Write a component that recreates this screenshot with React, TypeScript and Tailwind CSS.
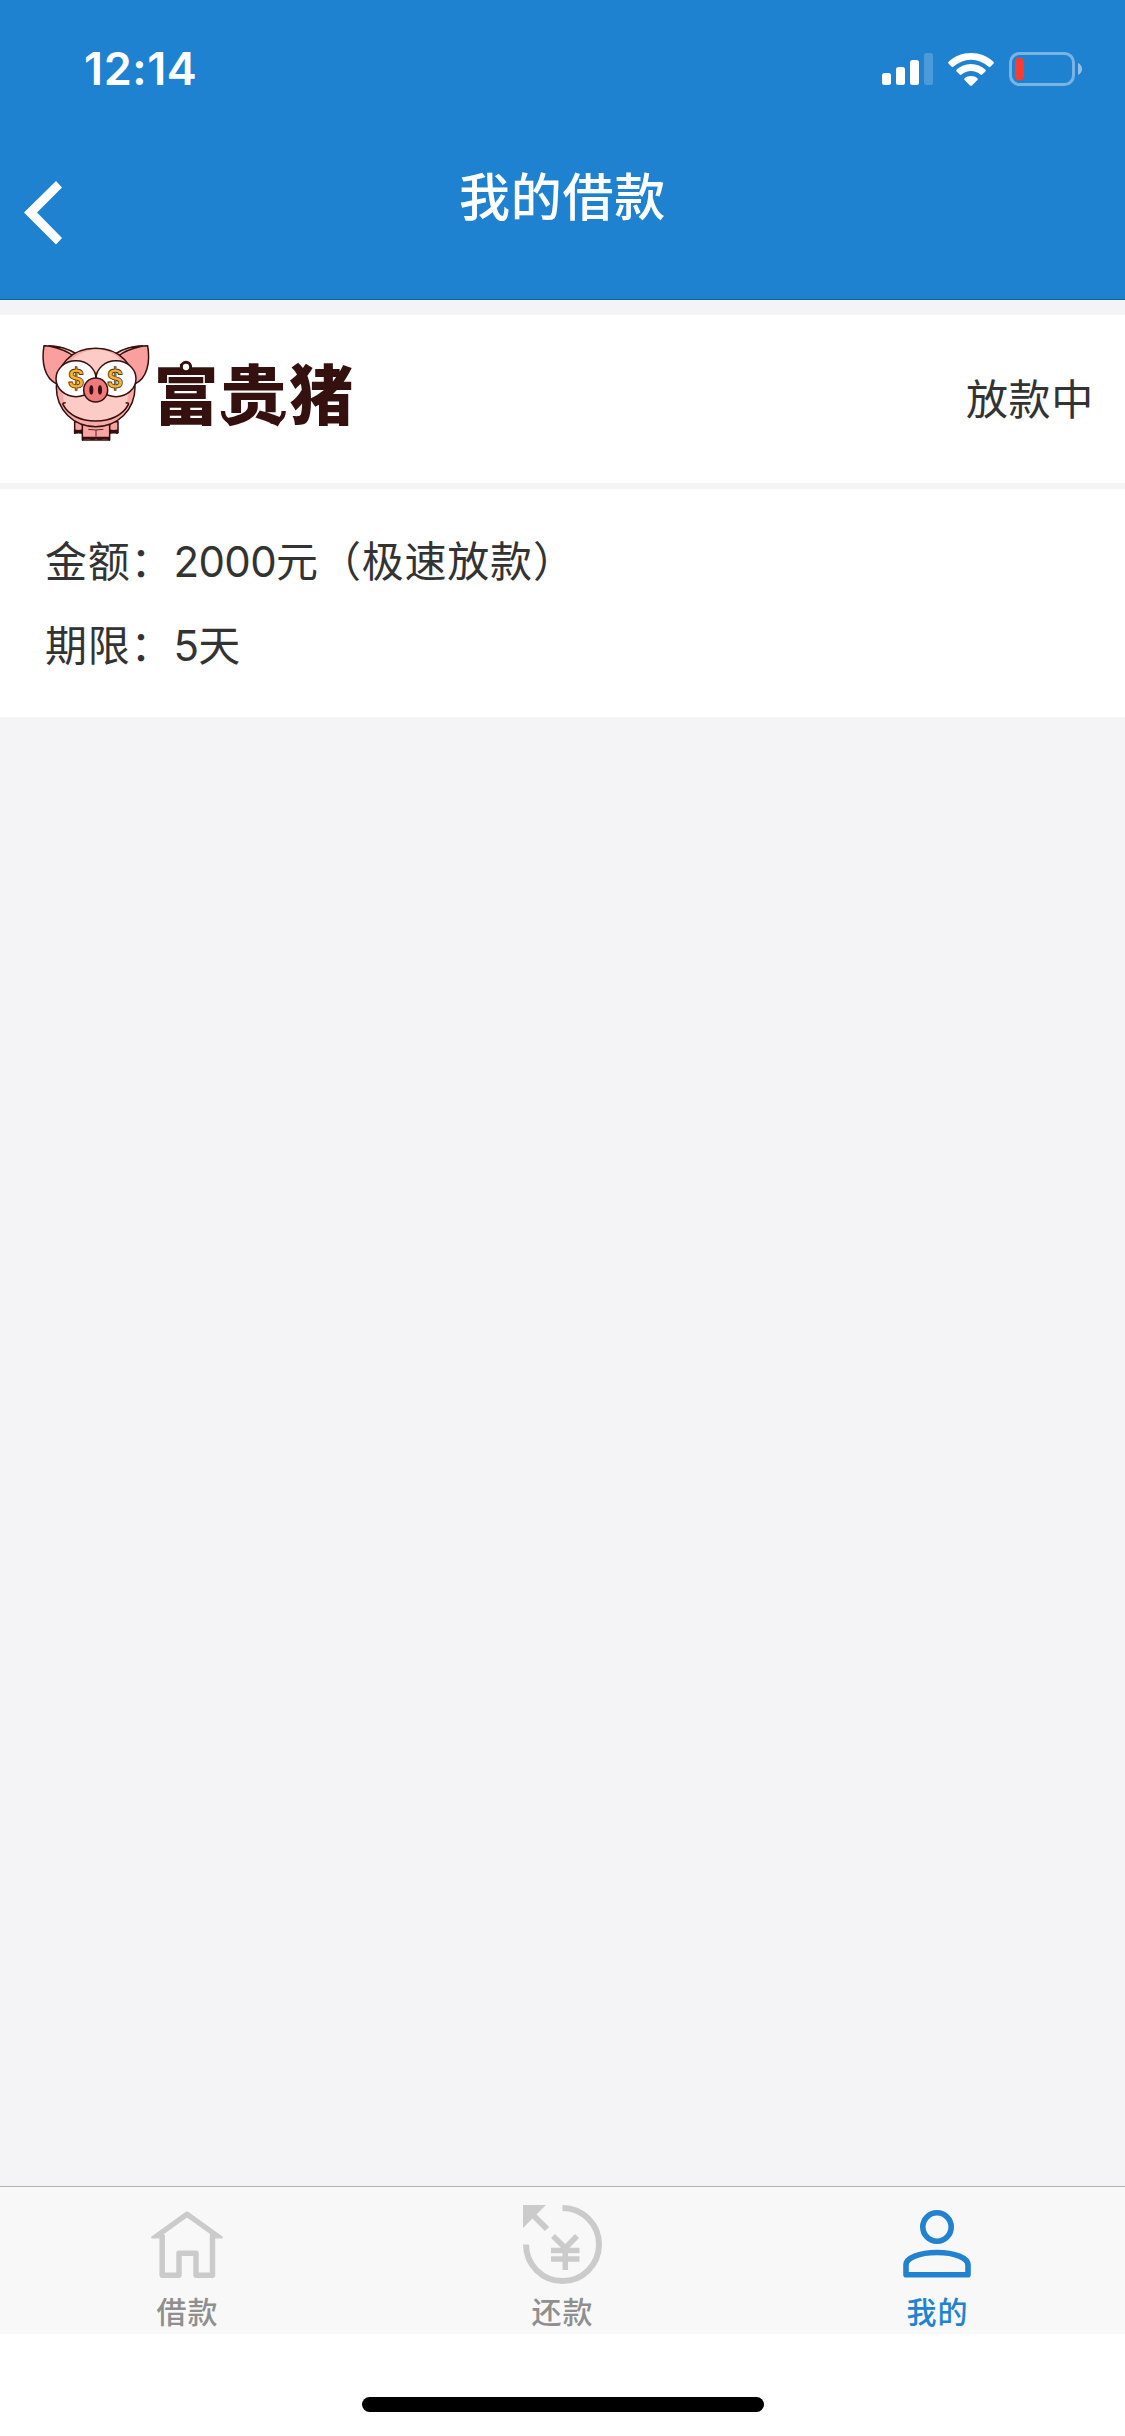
import React from "react";

const OUTLINE = "#34100f";

const SignalIcon = () => (
  <svg width="51" height="32" viewBox="0 0 51 32" fill="#fff">
    <rect x="0" y="20" width="9" height="12" rx="2.5" />
    <rect x="14" y="14" width="9" height="18" rx="2.5" />
    <rect x="28" y="7" width="9" height="25" rx="2.5" />
    <rect x="42" y="0" width="9" height="32" rx="2.5" opacity="0.2" />
  </svg>
);

const WifiIcon = () => (
  <svg width="46" height="33" viewBox="0 0 46 33" fill="#fff">
    <path d="M23 0C31.700 0 39.500 3.300 45.400 8.800Q46.300 9.700 45.500 10.600L42.400 13.800Q41.600 14.600 40.700 13.800A26 26 0 0 0 5.300 13.800Q4.400 14.600 3.600 13.800L.5 10.600Q-.3 9.700.6 8.800C6.500 3.300 14.300 0 23 0Z" />
    <path d="M23 11C28.600 11 33.500 13.100 37.300 16.600Q38.200 17.500 37.400 18.400L34.200 21.600Q33.400 22.400 32.500 21.600A14.500 14.500 0 0 0 13.500 21.600Q12.600 22.400 11.800 21.600L8.600 18.400Q7.800 17.500 8.700 16.600C12.500 13.100 17.400 11 23 11Z" />
    <path d="M23 23C25.600 23 27.700 23.900 29.400 25.300Q30.200 26.100 29.400 26.900L24 32.400Q23 33.300 22 32.400L16.600 26.900Q15.800 26.100 16.600 25.300C18.300 23.900 20.400 23 23 23Z" />
  </svg>
);

const BatteryIcon = () => (
  <svg width="73" height="34" viewBox="0 0 73 34">
    <rect x="1.500" y="1.500" width="63" height="31" rx="9" fill="none" stroke="#fff" strokeWidth="3" opacity="0.4" />
    <path d="M69 11C71.500 12.300 73 14.300 73 17S71.500 21.700 69 23Z" fill="#fff" opacity="0.5" />
    <rect x="6" y="6" width="9" height="22" rx="3.500" fill="#ff3b30" />
  </svg>
);

const BackIcon = () => (
  <svg width="38" height="64" viewBox="0 0 38 64" fill="#fff">
    <path d="M32 0L38 6.500L13 31.500L38 57L32 63.500L0 31.500Z" />
  </svg>
);

const HomeIcon = () => (
  <svg width="73" height="67" viewBox="0 0 73 67" fill="none" stroke="#cbcbcb" strokeWidth="5.500" strokeLinejoin="round">
    <path
      d="M36 .5L37.500 1L71.500 25.500Q72.500 27 71 27.500H59L36 7L13 27.500H1Q-.5 27 .5 25.500L34.500 1Z"
      fill="#cbcbcb"
      stroke="none"
    />
    <path d="M36 6.500L13 23V27.500H59V23Z" fill="#f8f8f8" stroke="none" />
    <path d="M11.200 24V64.300H28V42.300H45V64.300H61.500V24" />
  </svg>
);

const RepayIcon = () => (
  <svg width="79" height="79" viewBox="0 0 79 79" fill="none" stroke="#cbcbcb" strokeWidth="6">
    <path d="M39.500 3A36.500 36.500 0 1 1 3 39.500" />
    <path d="M9 9L24 24" />
    <path d="M0 0H23L0 23Z" fill="#cbcbcb" stroke="none" />
    <path d="M30 31L42.300 43L54 31M42.300 41V65M28 45.500H56.500M28 54H56.500" strokeWidth="5.500" />
  </svg>
);

const UserIcon = () => (
  <svg width="68" height="68" viewBox="0 0 68 68" fill="none" stroke="#2182d0" strokeWidth="5.600">
    <circle cx="34" cy="17" r="14.200" />
    <path d="M3 64.800V55C3 48 16 42.500 34 42.500S65 48 65 55V64.800Z" strokeLinejoin="round" />
  </svg>
);

const BrandLogo = () => (
  <svg width="340" height="168" viewBox="0 15 1020 504">
    <g stroke={OUTLINE} strokeWidth="4.500" strokeLinejoin="round">
      {/* legs */}
      <path d="M134 335H160V368H134Z" fill="#f9a3a1" />
      <path d="M238 335H264V368H238Z" fill="#f9a3a1" />
      <path d="M134 361Q146 364 156 361V370Q146 364 134 370ZM240 361Q252 364 262 361V370Q252 364 240 370Z" fill={OUTLINE} />
      <path d="M157 335V390H239V335Z" fill="#f9a5a3" />
      {/* ears */}
      <path d="M42 107C34 155 42 205 82 223C88 185 108 152 136 132C112 116 78 107 42 107Z" fill="#f9a09f" />
      <path d="M353 107C361 155 353 205 313 223C307 185 287 152 259 132C283 116 317 107 353 107Z" fill="#f9a09f" />
      <path d="M57 108C88 108 115 116 140 132L130 138C108 120 80 113 57 108Z" fill="#fbcac6" />
      <path d="M338 108C307 108 280 116 255 132L265 138C287 120 315 113 338 108Z" fill="#fbcac6" />
      {/* head */}
      <path d="M197 115C272 115 315 167 315 232C315 300 263 350 197 350S79 300 79 232C79 167 122 115 197 115Z" fill="#f8aaa7" />
      <path d="M103 279C112 312 151 333 197 333S282 312 291 279C300 225 292 160 255 135Q200 102 145 135C100 160 90 220 103 279Z" fill="#fdcbc5" stroke="none" />
      <path d="M99 284C115 315 152 333 197 333S279 315 295 284M99 284Q97 278 107 278M295 284Q297 278 287 278" fill="none" />
      {/* eyes */}
      <ellipse cx="138" cy="206" rx="60" ry="54" fill="#fff" />
      <ellipse cx="258" cy="206" rx="60" ry="54" fill="#fff" />
    </g>
    <g
      className="font-[Inter,sans-serif] font-bold"
      fontSize="76"
      fill="#f8b62d"
      stroke="#5a3415"
      strokeWidth="2.500"
      textAnchor="middle"
    >
      <text x="138" y="234">$</text>
      <text x="255" y="234">$</text>
    </g>
    <circle cx="197" cy="240" r="36" fill="#ee7a7e" stroke={OUTLINE} strokeWidth="4.500" />
    <ellipse cx="184" cy="240" rx="6" ry="14" fill={OUTLINE} />
    <ellipse cx="210" cy="240" rx="6" ry="14" fill={OUTLINE} />
    <path d="M175 358Q197 362 220 358M198 360V380" fill="none" stroke={OUTLINE} strokeWidth="2.500" />
    <path d="M156 380H239V393Q230 384 218 388Q208 393 198 386Q188 393 178 388Q166 384 156 393Z" fill={OUTLINE} />
    {/* brand name */}
    <g
      className="font-['Noto_Sans_CJK_SC',sans-serif] font-black"
      fontSize="194"
      fill={OUTLINE}
      textAnchor="middle"
    >
      <text x="468" y="327">富</text>
      <text x="670" y="327">贵</text>
      <text x="873" y="327">猪</text>
    </g>
    <path
      d="M579 303C579 326 596 337 618 334M761 303C761 326 744 337 722 334"
      fill="none"
      stroke={OUTLINE}
      strokeWidth="13"
    />
    <circle cx="468" cy="171" r="14" fill="#fff" stroke={OUTLINE} strokeWidth="9" />
  </svg>
);

const tabs = [
  { label: "借款", icon: <HomeIcon />, active: false },
  { label: "还款", icon: <RepayIcon />, active: false },
  { label: "我的", icon: <UserIcon />, active: true },
];

const details = [
  { name: "金额：", value: "2000", unit: "元（极速放款）" },
  { name: "期限：", value: "5", unit: "天" },
];

const App: React.FC = () => {
  return (
    <div className="flex h-[2436px] w-[1125px] flex-col overflow-hidden bg-[#f4f4f7] font-[Inter,'Noto_Sans_CJK_SC',sans-serif] text-[#333]">
      <header className="flex h-[300px] shrink-0 flex-col border-b border-[#165f9b] bg-[#1f82d1] text-white">
        <div className="flex h-[132px] items-center justify-between pt-[6px] pr-[43px] pl-[84px]">
          <span className="text-[45px] font-semibold tracking-[0.600px]">12:14</span>
          <div className="flex items-center gap-[15px]">
            <SignalIcon />
            <WifiIcon />
            <BatteryIcon />
          </div>
        </div>
        <div className="grid grid-cols-[200px_1fr_200px]">
          <button className="pt-[49px] pl-6" aria-label="返回">
            <BackIcon />
          </button>
          <h1 className="pt-[26px] text-center text-[51px] leading-[80px] font-medium tracking-[0.800px]">
            我的借款
          </h1>
        </div>
      </header>

      <main className="flex-1 pt-[15px]">
        <section className="flex h-[168px] items-center justify-between bg-white pr-[31px] pl-[30px]">
          <BrandLogo />
          <span className="text-[42px] tracking-[0.700px]">放款中</span>
        </section>
        <section className="mt-[6px] h-[228px] bg-white px-[45px] pt-[31px]">
          {details.map((d) => (
            <p key={d.name} className="text-[42px] leading-[84px] tracking-[0.800px]">
              {d.name}
              <span className="tracking-[-0.600px]">{d.value}</span>
              {d.unit}
            </p>
          ))}
        </section>
      </main>

      <nav className="grid h-[148px] shrink-0 grid-cols-3 border-t border-[#b2b2b2] bg-[#f8f8f8]">
        {tabs.map((tab) => (
          <div
            key={tab.label}
            className={`flex flex-col items-center ${tab.active ? "text-[#2182d0]" : "text-[#8f8f8f]"}`}
          >
            <div className="flex h-[100px] items-center pt-[14px] pr-px">{tab.icon}</div>
            <span className="text-[30px] leading-[50px] font-medium tracking-[1px]">{tab.label}</span>
          </div>
        ))}
      </nav>
      <div className="flex h-[102px] shrink-0 justify-center bg-white pt-[63px]">
        <div className="h-[15px] w-[402px] rounded-full bg-black" />
      </div>
    </div>
  );
};

export default App;
